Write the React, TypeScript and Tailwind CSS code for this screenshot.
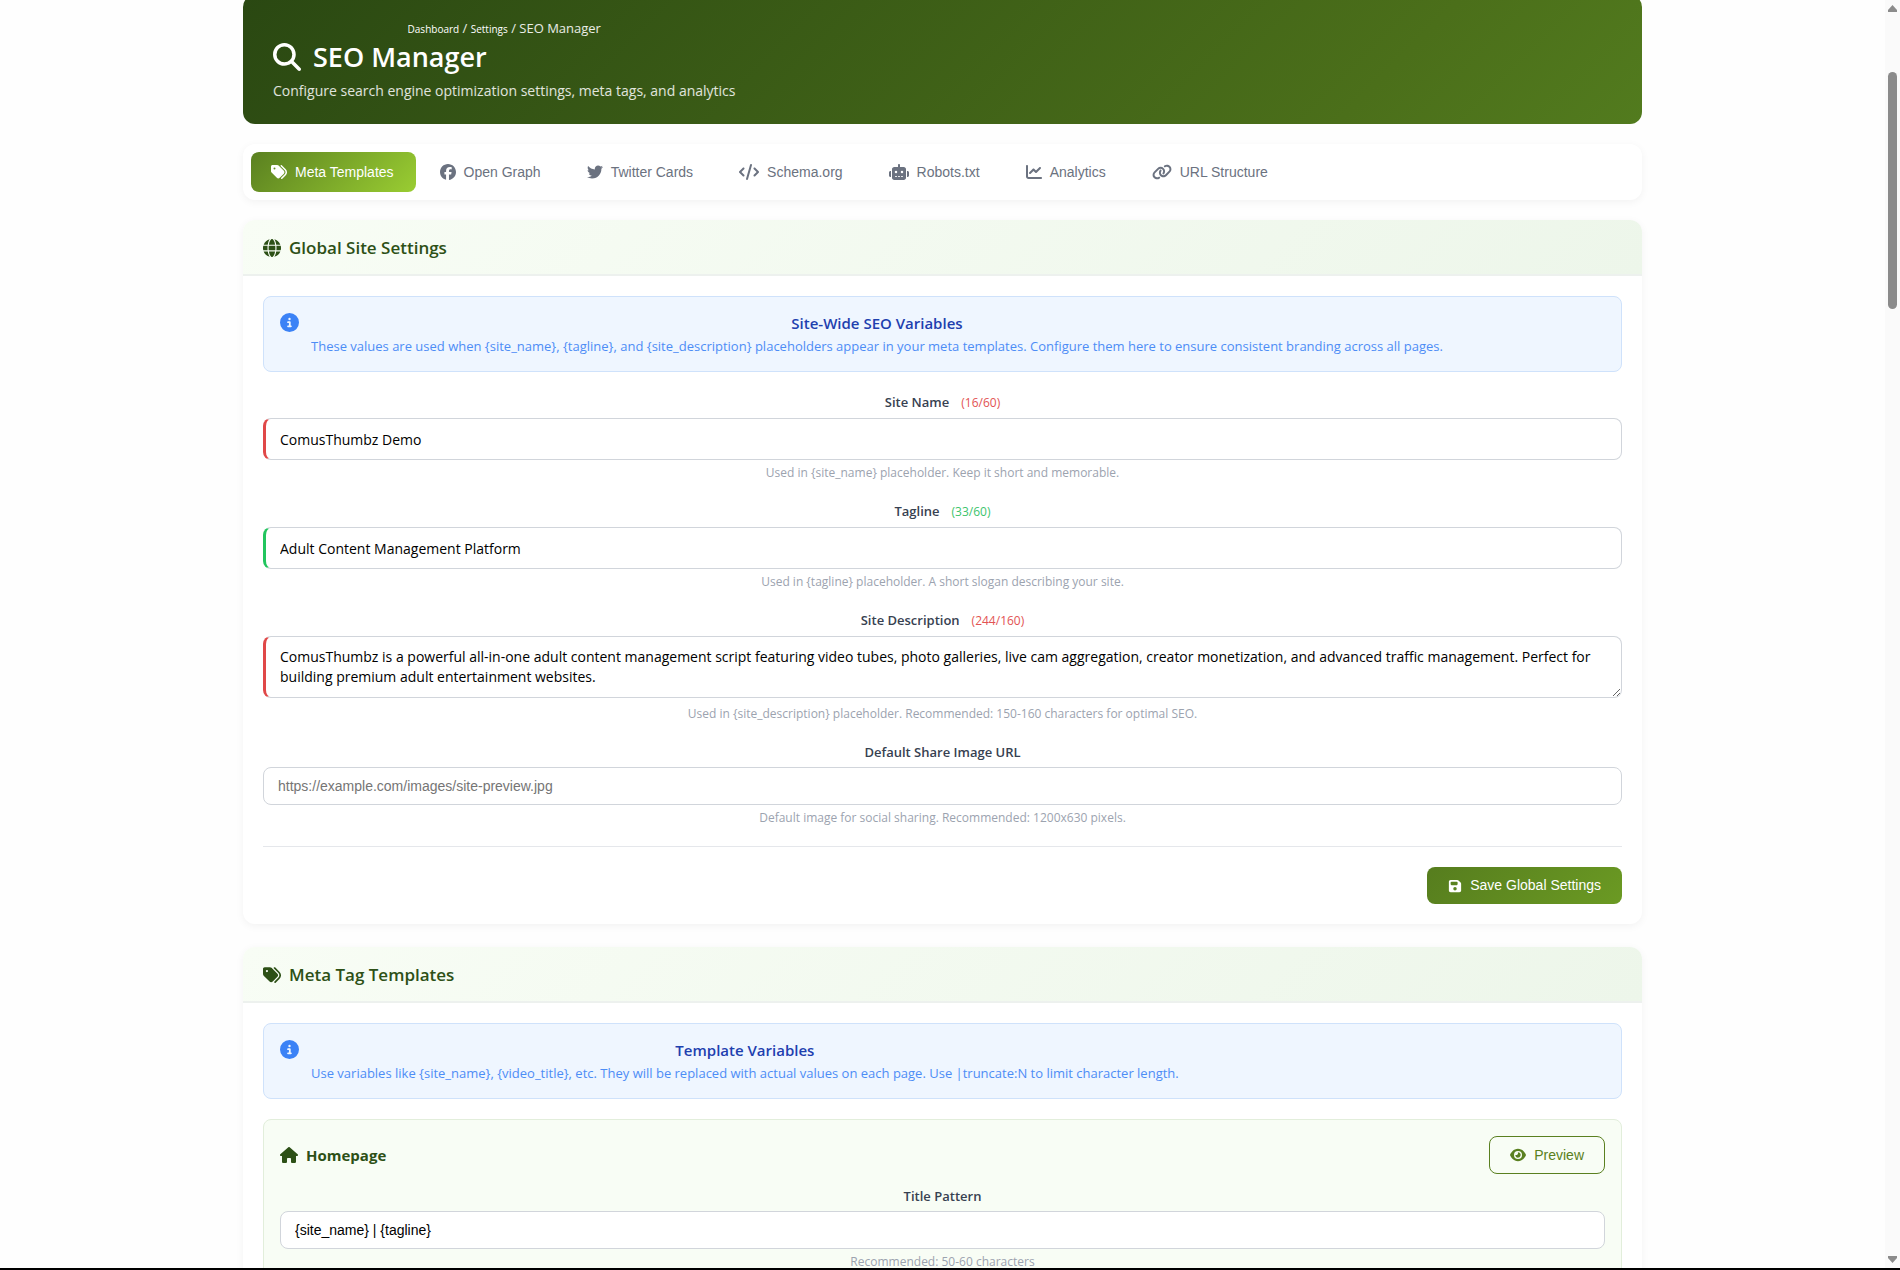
import type { ReactNode } from 'react';
import {
	FaChartLine,
	FaCircleInfo,
	FaCode,
	FaEye,
	FaFacebook,
	FaFloppyDisk,
	FaGlobe,
	FaHouse,
	FaLink,
	FaMagnifyingGlass,
	FaRobot,
	FaTags,
	FaTwitter,
} from 'react-icons/fa6';

const tabs = [
	{ label: 'Meta Templates', icon: FaTags, iconClass: 'h-4 w-4', active: true },
	{ label: 'Open Graph', icon: FaFacebook, iconClass: 'h-4 w-4' },
	{ label: 'Twitter Cards', icon: FaTwitter, iconClass: 'h-4 w-4' },
	{ label: 'Schema.org', icon: FaCode, iconClass: 'h-4 w-5' },
	{ label: 'Robots.txt', icon: FaRobot, iconClass: 'h-4 w-5' },
	{ label: 'Analytics', icon: FaChartLine, iconClass: 'h-4 w-4' },
	{ label: 'URL Structure', icon: FaLink, iconClass: 'h-4 w-5' },
];

const inputBase = "block w-full rounded-lg border border-[#d1d5db] bg-white px-3.5 text-black outline-none";
const plainInput = inputBase + " h-[38px] font-['Liberation_Sans',sans-serif] text-[14px] placeholder:text-[#757575]";
const countedInput = inputBase + " border-l-[3px] text-[14px]";

function PageHeader() {
	return (
		<header className="flex rounded-xl bg-linear-[135deg,#2a4812_0%,#4b6f1a_80%,#527b1e_100%] px-[30px] py-[23px] text-white">
			<div>
				<nav aria-label="Breadcrumb" className="text-center text-[13px] leading-5 text-white/90">
					<a href="#dashboard" className="text-[10px] text-white">Dashboard</a>
					{' / '}
					<a href="#settings" className="text-[10px] text-white">Settings</a>
					{' / '}
					<span>SEO Manager</span>
				</nav>
				<h1 className="flex items-center gap-3 text-[27px] leading-9 font-semibold">
					<FaMagnifyingGlass className="size-7" />
					SEO Manager
				</h1>
				<p className="mt-1.5 text-[14px] leading-5 text-white/85">
					Configure search engine optimization settings, meta tags, and analytics
				</p>
			</div>
		</header>
	);
}

function TabBar() {
	return (
		<nav className="mt-5 flex gap-1 rounded-xl bg-white p-2 shadow-[0_2px_8px_rgba(0,0,0,0.05)]">
			{tabs.map(({ label, icon: Icon, iconClass, active }) => (
				<button
					key={label}
					type="button"
					className={
						"flex h-10 items-center gap-2 rounded-lg pr-[22px] pl-5 font-['Liberation_Sans',sans-serif] text-[14px] " +
						(active ? 'bg-linear-[135deg,#5a8020,#9acd32] text-white' : 'text-[#6b7280]')
					}
				>
					<Icon className={iconClass} />
					{label}
				</button>
			))}
		</nav>
	);
}

function Card({ icon, title, children }: { icon: ReactNode; title: string; children: ReactNode }) {
	return (
		<section className="overflow-hidden rounded-xl bg-white shadow-[0_2px_8px_rgba(0,0,0,0.05)]">
			<h2 className="flex h-14 items-center gap-2 border-b-2 border-[#edf1ee] bg-linear-[135deg,#f8fdf5,#edf6ea] px-5 pt-0.5 text-[17px] font-semibold text-[#2d5016]">
				{icon}
				{title}
			</h2>
			<div className="p-5">{children}</div>
		</section>
	);
}

function InfoBox({ title, children }: { title: string; children: ReactNode }) {
	return (
		<div className="flex items-start gap-3 rounded-lg border border-[#cfe2fb] bg-[#eff6ff] p-4 text-[#3b82f6]">
			<FaCircleInfo className="size-[19px] shrink-0" />
			<div className="text-center">
				<h4 className="text-[15px] leading-5 font-semibold text-[#1e40af]">{title}</h4>
				<p className="mt-1 text-[13px] leading-[18px] opacity-90">{children}</p>
			</div>
		</div>
	);
}

interface FieldProps {
	id: string;
	label: string;
	hint: string;
	count?: string;
	countClass?: string;
	children: ReactNode;
}

function Field({ id, label, hint, count, countClass, children }: FieldProps) {
	return (
		<div className="text-center">
			<label htmlFor={id} className="mb-[5px] block text-[13px] leading-5 font-semibold text-[#374151]">
				{label}
				{count && <span className={'ml-3 text-[12px] font-normal ' + countClass}>({count})</span>}
			</label>
			{children}
			<p className="mt-1 text-[12px] leading-[17px] text-[#9ca3af]">{hint}</p>
		</div>
	);
}

function GlobalSettings() {
	return (
		<Card icon={<FaGlobe className="size-[18px]" />} title="Global Site Settings">
			<InfoBox title="Site-Wide SEO Variables">
				{'These values are used when {site_name}, {tagline}, and {site_description} placeholders appear in your meta templates. Configure them here to ensure consistent branding across all pages.'}
			</InfoBox>
			<form className="mt-5">
				<div className="flex flex-col gap-5">
					<Field
						id="site-name"
						label="Site Name"
						count="16/60"
						countClass="text-[#e25353]"
						hint="Used in {site_name} placeholder. Keep it short and memorable."
					>
						<input id="site-name" className={countedInput + ' h-[42px] border-l-[#e04848]'} defaultValue="ComusThumbz Demo" />
					</Field>
					<Field
						id="tagline"
						label="Tagline"
						count="33/60"
						countClass="text-[#3cc46c]"
						hint="Used in {tagline} placeholder. A short slogan describing your site."
					>
						<input id="tagline" className={countedInput + ' h-[42px] border-l-[#22c55e]'} defaultValue="Adult Content Management Platform" />
					</Field>
					<Field
						id="site-description"
						label="Site Description"
						count="244/160"
						countClass="text-[#e25353]"
						hint="Used in {site_description} placeholder. Recommended: 150-160 characters for optimal SEO."
					>
						<textarea
							id="site-description"
							rows={2}
							className={countedInput + ' mb-[7px] resize-y border-l-[#e04848] py-[10px] leading-5'}
							defaultValue="ComusThumbz is a powerful all-in-one adult content management script featuring video tubes, photo galleries, live cam aggregation, creator monetization, and advanced traffic management. Perfect for building premium adult entertainment websites."
						/>
					</Field>
					<Field
						id="share-image"
						label="Default Share Image URL"
						hint="Default image for social sharing. Recommended: 1200x630 pixels."
					>
						<input id="share-image" className={plainInput} placeholder="https://example.com/images/site-preview.jpg" />
					</Field>
				</div>
				<div className="mt-5 flex justify-end border-t border-[#e5e7eb] pt-5">
					<button
						type="button"
						className="flex h-[37px] items-center gap-2 rounded-lg bg-linear-[135deg,#567d1e,#6b9a23] px-[21px] font-['Liberation_Sans',sans-serif] text-[14px] text-white"
					>
						<FaFloppyDisk className="size-3.5" />
						Save Global Settings
					</button>
				</div>
			</form>
		</Card>
	);
}

function MetaTemplates() {
	return (
		<Card icon={<FaTags className="size-[18px]" />} title="Meta Tag Templates">
			<InfoBox title="Template Variables">
				{'Use variables like {site_name}, {video_title}, etc. They will be replaced with actual values on each page. Use |truncate:N to limit character length.'}
			</InfoBox>
			<div className="mt-5 rounded-lg border border-[#e2eedb] bg-[#f8fdf5] p-4">
				<div className="mb-3 flex items-center justify-between">
					<h3 className="flex items-center gap-2 text-[15px] font-bold text-[#2d5016]">
						<FaHouse className="h-4 w-[18px]" />
						Homepage
					</h3>
					<button
						type="button"
						className="flex h-[38px] items-center gap-2 rounded-lg border border-[#5a8020] px-5 font-['Liberation_Sans',sans-serif] text-[14px] text-[#5a8020]"
					>
						<FaEye className="size-4" />
						Preview
					</button>
				</div>
				<Field id="home-title" label="Title Pattern" hint="Recommended: 50-60 characters">
					<input id="home-title" className={plainInput} defaultValue="{site_name} | {tagline}" />
				</Field>
			</div>
		</Card>
	);
}

function ScrollTrack() {
	return (
		<div className="flex w-[15px] shrink-0 flex-col items-center justify-between bg-[#fafafa] py-1" aria-hidden="true">
			<svg width="9" height="8" viewBox="0 0 9 8"><path d="M4.5 1 9 6v2H0V6z" fill="#8b8b8b" /></svg>
			<div className="flex min-h-0 w-full flex-1 flex-col items-center pt-[60px]">
				<div className="h-1/5 w-[9px] rounded-full bg-[#8b8b8b]" />
			</div>
			<svg width="9" height="8" viewBox="0 0 9 8"><path d="M4.5 7 9 2V0H0v2z" fill="#8b8b8b" /></svg>
		</div>
	);
}

export default function App() {
	return (
		<div className="flex h-screen overflow-hidden border-b-2 border-black bg-[#fefefe] font-['Open_Sans','Noto_Sans',sans-serif]">
			<div className="min-w-0 flex-1 overflow-hidden">
				<main className="mx-auto -mt-[5px] max-w-[1399px]">
					<PageHeader />
					<TabBar />
					<div className="mt-5 flex flex-col gap-[23px]">
						<GlobalSettings />
						<MetaTemplates />
					</div>
				</main>
			</div>
			<ScrollTrack />
		</div>
	);
}
